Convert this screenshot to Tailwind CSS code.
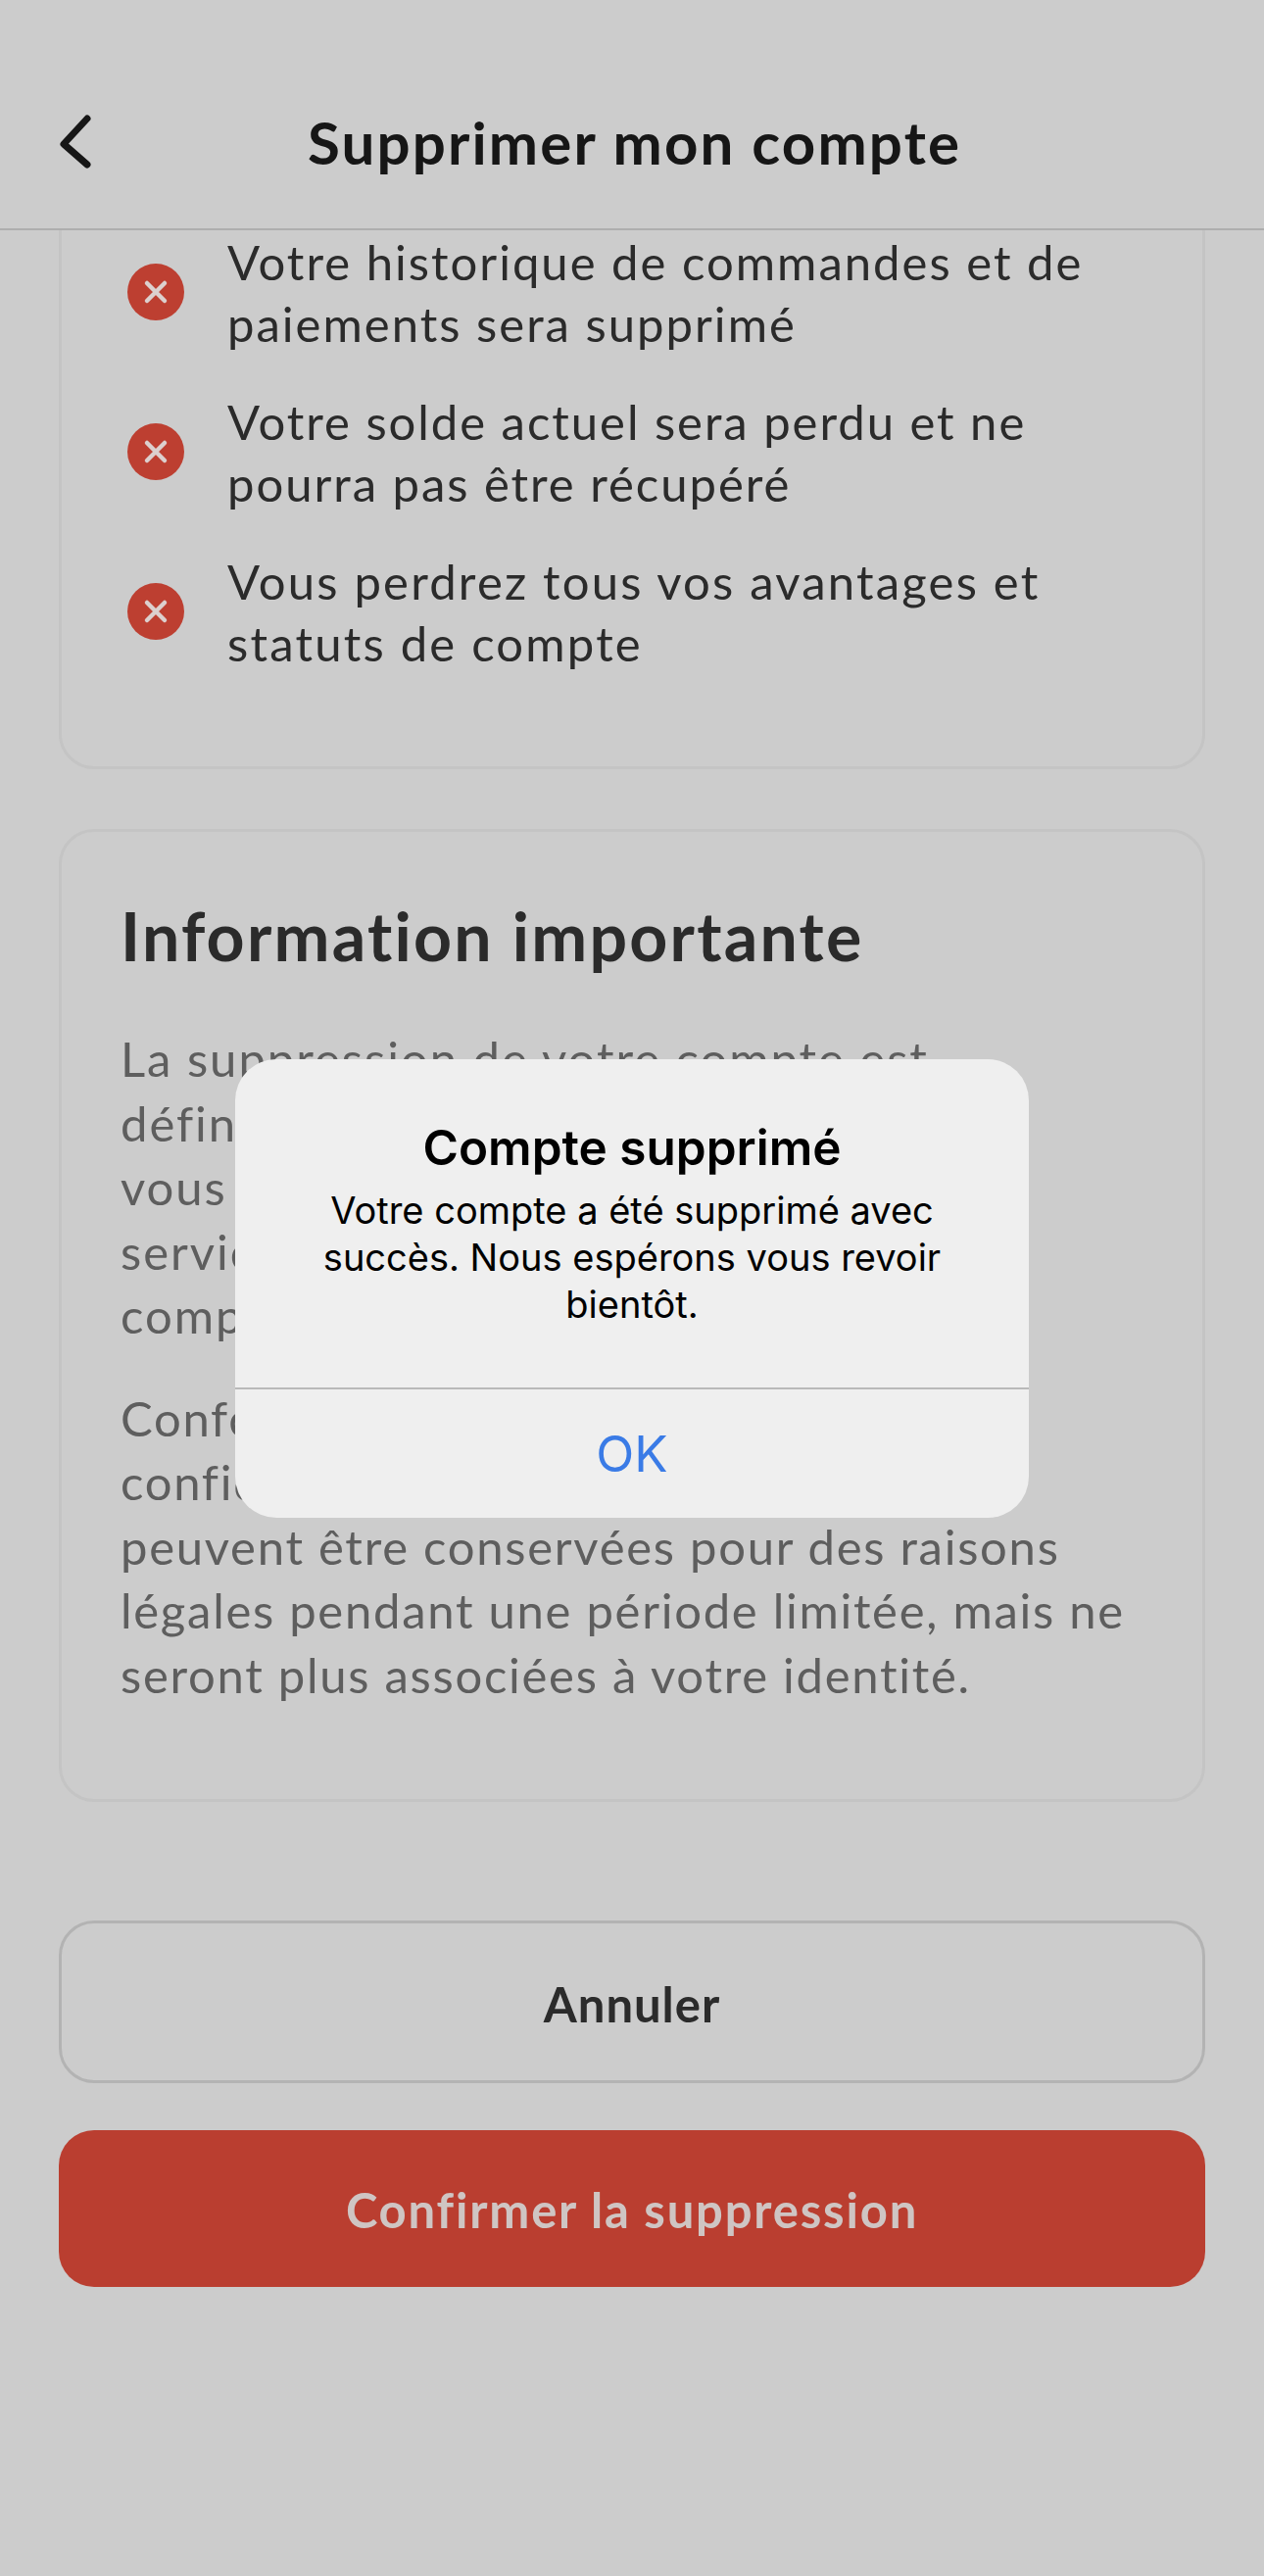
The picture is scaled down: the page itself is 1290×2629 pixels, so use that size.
<!DOCTYPE html>
<html lang="fr">

<head>
    <meta charset="UTF-8">
    <title>Supprimer mon compte</title>
    <script src="https://cdn.jsdelivr.net/npm/@tailwindcss/browser@4"></script>
</head>

<body class="bg-[#cccccc]">
    <div class="relative flex flex-col h-[2629px] overflow-hidden font-['Lato','Liberation_Sans',sans-serif]">
        <header class="relative z-10 shrink-0 h-[235px] border-b-2 border-[#aeaeae] bg-[#cccccc] flex items-end justify-center pb-[59px] pl-[5px]">
            <svg class="absolute left-[56px] top-[112px] w-[42px] h-[64px]" viewBox="0 0 42 64" fill="none" stroke="#161616" stroke-width="7" stroke-linecap="round" stroke-linejoin="round">
                <path d="M33 9 L9 35 L33 56"></path>
            </svg>
            <h1 class="text-[60px] leading-[58px] font-bold tracking-[0.036em] text-[#161616]">Supprimer mon compte</h1>
        </header>

        <main class="flex flex-col px-[60px]">
            <section class="-mt-[60px] h-[610px] border-[3px] border-[#c4c4c4] rounded-[36px] pt-[58px] pl-[67px] flex flex-col gap-[37px]">
                <div class="flex items-center gap-[44px]">
                    <svg class="shrink-0 -mt-[2px] w-[58px] h-[58px]" viewBox="0 0 58 58">
                        <circle cx="29" cy="29" r="29" fill="#bd3f31"></circle>
                        <path d="M20 20 L38 38 M38 20 L20 38" stroke="#dcd0ce" stroke-width="4.5" stroke-linecap="round"></path>
                    </svg>
                    <p class="text-[49px] leading-[63px] tracking-[0.041em] text-[#2b2b2b] whitespace-nowrap">Votre historique de commandes et de<br>paiements sera supprimé</p>
                </div>
                <div class="flex items-center gap-[44px]">
                    <svg class="shrink-0 -mt-[2px] w-[58px] h-[58px]" viewBox="0 0 58 58">
                        <circle cx="29" cy="29" r="29" fill="#bd3f31"></circle>
                        <path d="M20 20 L38 38 M38 20 L20 38" stroke="#dcd0ce" stroke-width="4.5" stroke-linecap="round"></path>
                    </svg>
                    <p class="text-[49px] leading-[63px] tracking-[0.04em] text-[#2b2b2b] whitespace-nowrap">Votre solde actuel sera perdu et ne<br>pourra pas être récupéré</p>
                </div>
                <div class="flex items-center gap-[44px]">
                    <svg class="shrink-0 -mt-[2px] w-[58px] h-[58px]" viewBox="0 0 58 58">
                        <circle cx="29" cy="29" r="29" fill="#bd3f31"></circle>
                        <path d="M20 20 L38 38 M38 20 L20 38" stroke="#dcd0ce" stroke-width="4.5" stroke-linecap="round"></path>
                    </svg>
                    <p class="text-[49px] leading-[63px] tracking-[0.045em] text-[#2b2b2b] whitespace-nowrap">Vous perdrez tous vos avantages et<br>statuts de compte</p>
                </div>
            </section>

            <section class="mt-[61px] h-[993px] border-[3px] border-[#c4c4c4] rounded-[36px] pt-[66px] pl-[60px]">
                <h2 class="text-[68px] leading-[80px] font-bold tracking-[0.033em] text-[#2b2b2b]">Information importante</h2>
                <p class="mt-[53px] text-[49px] leading-[65.5px] tracking-[0.04em] text-[#5e5e5e] whitespace-nowrap">La suppression de votre compte est<br>définitive et toutes vos données<br>vous seront retirées. Nos<br>services ne pourront pas<br>compte.</p>
                <p class="mt-[39px] text-[49px] leading-[65.5px] tracking-[0.035em] text-[#5e5e5e] whitespace-nowrap">Conformément à notre politique de<br>confidentialité, certaines données<br>peuvent être conservées pour des raisons<br>légales pendant une période limitée, mais ne<br>seront plus associées à votre identité.</p>
            </section>

            <button type="button" class="mt-[121px] h-[166px] pt-[5px] border-[3px] border-[#b3b3b3] rounded-[36px] text-[49px] font-bold tracking-[0.02em] text-[#2b2b2b]">Annuler</button>
            <button type="button" class="mt-[48px] h-[160px] pt-[4px] bg-[#ba3e30] rounded-[36px] text-[49px] font-bold tracking-[0.037em] text-[#cfc5c3]">Confirmer la suppression</button>
        </main>

        <!-- alert over the page -->
        <div class="absolute inset-0 z-20 flex items-center justify-center font-['Inter',sans-serif]">
            <div class="w-[810px] h-[468px] bg-[#efefef] rounded-[42px] flex flex-col text-center">
                <div class="h-[337px] border-b-2 border-[#b9b9b9] pt-[60px]">
                    <h3 class="text-[49.5px] leading-[60px] font-semibold text-black">Compte supprimé</h3>
                    <p class="mt-[10px] text-[38px] leading-[48px] text-black">Votre compte a été supprimé avec<br>succès. Nous espérons vous revoir<br>bientôt.</p>
                </div>
                <button type="button" class="flex-1 pt-[2px] text-[51px] text-[#3a7be6]">OK</button>
            </div>
        </div>
    </div>
</body>

</html>
